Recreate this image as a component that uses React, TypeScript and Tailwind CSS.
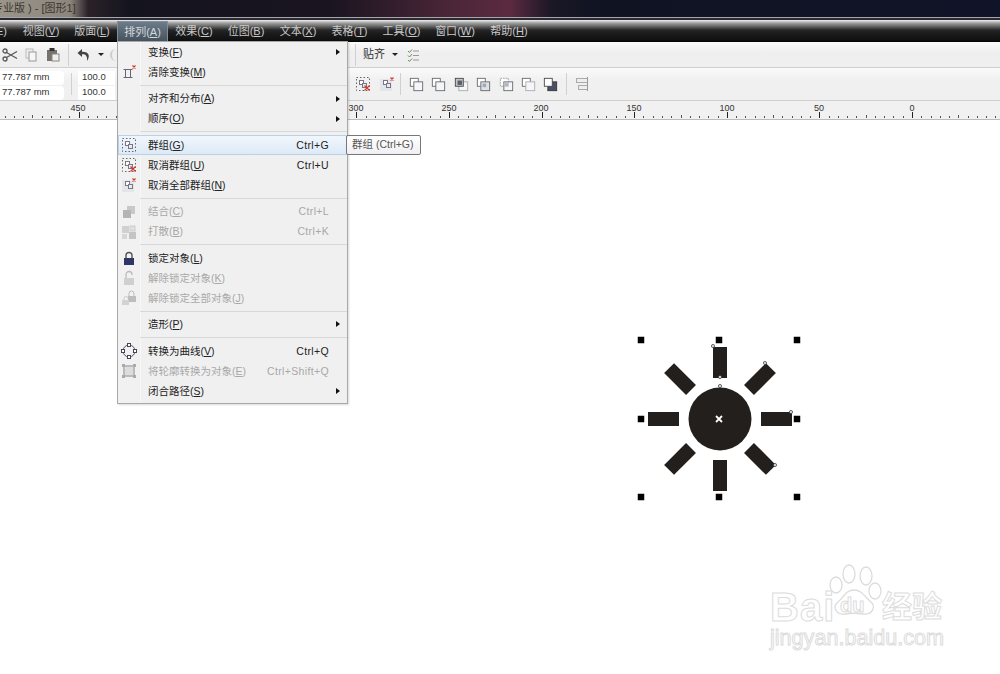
import React from "react";

const menuBar: [string, string, number][] = [
  ["视图", "V", 52], ["版面", "L", 50], ["排列", "A", 51], ["效果", "C", 52], ["位图", "B", 52],
  ["文本", "X", 52], ["表格", "T", 51], ["工具", "O", 53], ["窗口", "W", 54], ["帮助", "H", 54],
];

const S = ({ children, w = 16, h = 16, className = "" }: { children: React.ReactNode; w?: number; h?: number; className?: string }) => (
  <svg width={w} height={h} viewBox={`0 0 ${w} ${h}`} className={className} fill="none">{children}</svg>
);
const RedX = ({ x, y, s = 2 }: { x: number; y: number; s?: number }) => (
  <path d={`M${x - s} ${y - s}L${x + s} ${y + s}M${x + s} ${y - s}L${x - s} ${y + s}`} stroke="#d8352a" strokeWidth="1.2" />
);
const Dashed = () => <rect x="1.5" y="1.5" width="13" height="13" stroke="#666" strokeDasharray="1.5 2" />;
const Pair = ({ c = "#778" }: { c?: string }) => (
  <g stroke={c}><rect x="4.5" y="4.5" width="4" height="4" fill="#fff" /><rect x="7.5" y="7.5" width="4" height="4" fill="#e8ecf2" /></g>
);
const IconClear = () => <S><path d="M2.5 5.5h9M2.5 13.5h9M4.5 5.5v8M9.5 5.5v8" stroke="#667" /><RedX x={13} y={3} s={1.5} /></S>;
const IconGroup = () => <S><Dashed /><Pair /></S>;
const IconUngroup = () => <S><Dashed /><Pair /><RedX x={12} y={12} s={2.5} /></S>;
const IconUngroupAll = () => <S><rect x="1" y="3" width="12" height="12" fill="#e3e5ea" /><Pair /><RedX x={13} y={3} s={1.5} /></S>;
const IconCombine = () => <S><rect x="6" y="2" width="8" height="8" fill="#c8c8c8" /><rect x="2" y="6" width="8" height="8" fill="#b4b4b4" /></S>;
const IconBreak = () => <S><rect x="1" y="2" width="7" height="7" fill="#d0d0d0" /><rect x="9" y="2" width="5" height="5" fill="#e0e0e0" stroke="#ccc" /><rect x="1" y="10" width="5" height="5" fill="#d6d6d6" /><rect x="8" y="8" width="7" height="7" fill="#c4c4c4" /></S>;
const IconLock = () => (
  <S><path d="M5 8V5.5a3 3 0 0 1 6 0V8" stroke="#555" strokeWidth="1.4" /><rect x="3" y="8" width="10" height="7" fill="#2f3564" /></S>
);
const IconUnlock = () => <S><path d="M5 8V4.5a3 3 0 0 1 6 0V5" stroke="#bbb" strokeWidth="1.3" /><rect x="3" y="8" width="10" height="7" fill="#cfcfcf" /></S>;
const IconUnlockAll = () => <S><path d="M8 6V3.5a2.5 2.5 0 0 1 5 0V6" stroke="#bbb" /><rect x="7" y="6" width="8" height="6" fill="#bdbdbd" /><path d="M3 10V8.5a2 2 0 0 1 4 0" stroke="#ccc" /><rect x="1" y="10" width="7" height="5" fill="#d2d2d2" /></S>;
const IconCurve = () => (
  <S><circle cx="8" cy="8" r="6" stroke="#556" /><g fill="#fff" stroke="#445"><rect x="6.5" y="0.5" width="3" height="3" /><rect x="6.5" y="12.5" width="3" height="3" /><rect x="0.5" y="6.5" width="3" height="3" /><rect x="12.5" y="6.5" width="3" height="3" /></g></S>
);
const IconOutline = () => <S><rect x="3" y="3" width="10" height="10" fill="#ddd" stroke="#bbb" strokeWidth="2" /><g fill="#aaa"><rect x="1" y="1" width="3" height="3" /><rect x="12" y="1" width="3" height="3" /><rect x="1" y="12" width="3" height="3" /><rect x="12" y="12" width="3" height="3" /></g></S>;

type Row = { sep?: string; label?: string; k?: string; short?: string; arrow?: boolean; off?: boolean; hi?: boolean; icon?: React.ReactNode };

const items: Row[] = [
  { label: "变换", k: "F", arrow: true },
  { label: "清除变换", k: "M", icon: <IconClear /> },
  { sep: "h-[6.5px]" },
  { label: "对齐和分布", k: "A", arrow: true },
  { label: "顺序", k: "O", arrow: true },
  { sep: "h-[6.5px]" },
  { label: "群组", k: "G", short: "Ctrl+G", hi: true, icon: <IconGroup /> },
  { label: "取消群组", k: "U", short: "Ctrl+U", icon: <IconUngroup /> },
  { label: "取消全部群组", k: "N", icon: <IconUngroupAll /> },
  { sep: "h-[6.5px]" },
  { label: "结合", k: "C", short: "Ctrl+L", off: true, icon: <IconCombine /> },
  { label: "打散", k: "B", short: "Ctrl+K", off: true, icon: <IconBreak /> },
  { sep: "h-[6.5px]" },
  { label: "锁定对象", k: "L", icon: <IconLock /> },
  { label: "解除锁定对象", k: "K", off: true, icon: <IconUnlock /> },
  { label: "解除锁定全部对象", k: "J", off: true, icon: <IconUnlockAll /> },
  { sep: "h-[6px]" },
  { label: "造形", k: "P", arrow: true },
  { sep: "h-[7px]" },
  { label: "转换为曲线", k: "V", short: "Ctrl+Q", icon: <IconCurve /> },
  { label: "将轮廓转换为对象", k: "E", short: "Ctrl+Shift+Q", off: true, icon: <IconOutline /> },
  { label: "闭合路径", k: "S", arrow: true },
];

const Shapes = ({ v }: { v: number }) => {
  const b = v === 6 ? "#4a5064" : v === 3 ? "#dde2ea" : "#f4f6fa";
  return (
    <S w={17} h={17} className="w-[15px] h-[15px]">
      {v === 2 || v === 6 ? (
        <>
          <rect x="5.5" y="5.5" width="10" height="10" fill={b} stroke={v === 6 ? "#333" : "#aaa"} />
          <rect x="1.5" y="1.5" width="9" height="9" fill={v === 6 ? "#fff" : "#c4c4c4"} stroke="#444" />
          {v === 2 && <rect x="4" y="4" width="5" height="5" fill="#5a5f70" />}
        </>
      ) : (
        <>
          <rect x="1.5" y="1.5" width="9" height="9" fill="#fff" stroke={v === 4 ? "#999" : "#666"} strokeDasharray={v === 4 ? "2 1" : undefined} />
          <rect x="5.5" y="5.5" width="10" height="10" fill={b} stroke={v === 5 ? "#aaa" : "#666"} />
          {v === 3 && <rect x="7.5" y="7.5" width="4" height="4" fill="#a0a7b5" />}
          {v === 4 && <rect x="6" y="6" width="5" height="5" fill="#b4b8c4" />}
        </>
      )}
    </S>
  );
};

const ticks = Array.from({ length: 110 }, (_, i) => i);
const rulerLabels: [string, number][] = [["450", 78], ["300", 356], ["250", 449], ["200", 541], ["150", 634], ["100", 727], ["50", 819], ["0", 912]];

const Sep = ({ h = "h-[22px]", ml = "" }: { h?: string; ml?: string }) => <div className={`w-px bg-[#d0d0d0] ${h} ${ml}`} />;

const rays = [0, 45, 90, 135, 180, 225, 270, 315];
const corners: [number, number][] = [[11, 10], [89, 10], [167, 10], [11, 89], [167, 89], [11, 167], [89, 167], [167, 167]];
const nodes: [number, number][] = [[83, 16], [90, 47], [90, 56], [135, 33], [161, 82], [145, 135]];

export default function App() {
  return (
    <div className="relative w-[1000px] h-[674px] overflow-hidden bg-white flex flex-col [font-family:'Liberation_Sans','Noto_Sans_CJK_SC',sans-serif] text-[11px]">
      {/* title */}
      <div className="h-[17px] shrink-0 flex items-center bg-[linear-gradient(90deg,#9a948a_0px,#8c867c_70px,#2a2228_88px,#14141f_130px,#1a1420_330px,#4a2638_450px,#5c2a40_510px,#1c1826_550px,#0f1322_600px,#111428_1000px)]">
        <span className="ml-[-8px] text-[11px] text-[#3a3630] whitespace-pre">专业版 ) - [图形1]</span>
      </div>
      <div className="h-px shrink-0 bg-[#a5a5ab]" />
      <div className="h-[2px] shrink-0 bg-[#2a2a30]" />
      {/* menu bar */}
      <div className="h-[22px] shrink-0 flex bg-[linear-gradient(180deg,#f0f0f0_0px,#a0a0a0_3px,#5a5a5a_7px,#262626_10px,#1a1a1a_14px,#111_20px,#000_22px)] text-[#c9c9c9] text-[11px]">
        <div className="w-[15px] flex items-center justify-end pr-2 whitespace-nowrap">E)</div>
        {menuBar.map(([t, k, w]) => (
          <div
            key={t}
            style={{ width: w }}
            className={
              t === "排列"
                ? "flex items-center justify-center mt-px border border-b-0 border-[#7f8e9b] bg-[linear-gradient(180deg,#6d7c8a,#44515c)] text-[#d4d8dc]"
                : "flex items-center justify-center"
            }
          >
            {t}(<u>{k}</u>)
          </div>
        ))}
      </div>
      {/* toolbar 1 */}
      <div className="h-[26px] shrink-0 flex items-center bg-[linear-gradient(180deg,#fbfbfb,#efefef_40%)] border-b border-[#cfcfcf]">
        <div className="w-[2px]" />
        <S w={16} h={14}><circle cx="3" cy="3" r="2" stroke="#555" strokeWidth="1.3" /><circle cx="3" cy="11" r="2" stroke="#555" strokeWidth="1.3" /><path d="M4.5 4.5L15 10.5M4.5 9.5L15 3.5" stroke="#555" strokeWidth="1.2" /></S>
        <div className="w-[6px]" />
        <S w={12} h={14} className="ml-[1px]"><rect x="1" y="1" width="7" height="9" fill="#eee" stroke="#bbb" /><rect x="4" y="4" width="7" height="9" fill="#f6f6f6" stroke="#999" /></S>
        <div className="w-[9px]" />
        <S w={14} h={15}><rect x="1" y="3" width="10" height="11" fill="#77736a" /><rect x="3.5" y="1" width="5" height="3" fill="#333" /><rect x="6" y="7" width="7" height="7" fill="#eee" stroke="#888" /></S>
        <Sep ml="ml-[8px]" />
        <S w={16} h={14} className="ml-[7px]"><path d="M6 1L1.5 5L6 9V6.2C9.5 6 11.5 7.5 11 13C14.5 8 13 3.5 6 3.8Z" fill="#444" /></S>
        <div className="ml-[6px] w-0 h-0 border-x-[3px] border-x-transparent border-t-[3px] border-t-[#222]" />
        <div className="ml-[6px] w-[6px] h-[12px] rounded-l-full border-l-2 border-[#ccc]" />
        <div className="w-[239px]" />
        <Sep />
        <span className="ml-[7px] text-[#333] text-[11px]">贴齐</span>
        <div className="ml-[7px] w-0 h-0 border-x-[3px] border-x-transparent border-t-[3px] border-t-[#222]" />
        <S w={12} h={14} className="ml-[9px]"><path d="M1 3l1.5 1.5L5 1.5M1 7.5l1.5 1.5L5 6M1 12l1.5 1.5L5 10.5" stroke="#6c8a66" /><path d="M6 3h6M6 7.5h6M6 12h6" stroke="#999" /></S>
      </div>
      {/* toolbar 2 */}
      <div className="h-[33px] shrink-0 flex items-center bg-[linear-gradient(180deg,#fafafa,#f0f0f0_40%)] border-b border-[#cfcfcf]">
        <div className="w-[64px] h-[29px] mt-[2px] flex flex-col gap-px text-[#333] text-[9.5px]">
          <div className="h-[14px] bg-white rounded-r-sm flex items-center pl-[2px]">77.787 mm</div>
          <div className="h-[14px] bg-white rounded-r-sm flex items-center pl-[2px]">77.787 mm</div>
        </div>
        <Sep ml="ml-[7px]" />
        <div className="ml-[6px] w-[37px] h-[29px] mt-[2px] flex flex-col gap-px text-[#333] text-[9.5px]">
          <div className="h-[14px] bg-white flex items-center pl-[4px]">100.0</div>
          <div className="h-[14px] bg-white flex items-center pl-[4px]">100.0</div>
        </div>
        <div className="w-[240px]" />
        <IconUngroup />
        <div className="ml-[8px]"><IconUngroupAll /></div>
        <Sep ml="ml-[5px]" />
        <div className="ml-[8px] flex gap-[7.4px]">
          {[0, 1, 2, 3, 4, 5, 6].map((v) => (<Shapes key={v} v={v} />))}
        </div>
        <Sep ml="ml-[8px]" />
        <S w={14} h={14} className="ml-[8px]"><rect x="1.5" y="1.5" width="11" height="4" fill="#eee" stroke="#aaa" /><rect x="3.5" y="8.5" width="9" height="4" fill="#eee" stroke="#aaa" /><path d="M12.5 0v14" stroke="#999" /></S>
      </div>
      {/* ruler */}
      <div className="relative h-[19px] shrink-0 bg-[#f1f1f1] border-b border-[#bcbcbc]">
        <svg width="1000" height="18" className="block">
          {ticks.map((i) => {
            const x = 912 - (i - 9) * 9.26;
            const mid = (i - 9) % 5 === 0;
            const isLabelled = (i - 9) % 10 === 0;
            return (
              <path key={i} d={`M${Math.round(x) + 0.5} ${isLabelled ? 11 : mid ? 14 : 15}V17`} stroke={isLabelled ? "#222" : "#555"} />
            );
          })}
        </svg>
        {rulerLabels.map(([t, x]) => (
          <span key={t} style={{ left: x }} className="absolute top-[2px] -translate-x-1/2 text-[9px] leading-[11px] text-[#333]">{t}</span>
        ))}
      </div>
      {/* canvas */}
      <div className="relative flex-1 bg-white">
        <svg width="180" height="175" viewBox="0 0 180 175" className="absolute left-[630px] top-[210px]">
          <circle cx="90" cy="89" r="31.5" fill="#221f1c" />
          {rays.map((r) => (
            <rect key={r} x="83" y="17" width="14" height="31" fill="#221f1c" transform={`rotate(${r} 90 89)`} />
          ))}
          <path d="M86 86l6 6M92 86l-6 6" stroke="#fff" strokeWidth="1.8" />
          {corners.map(([x, y]) => (
            <rect key={`${x}-${y}`} x={x - 3.25} y={y - 3.25} width="6.5" height="6.5" fill="#000" />
          ))}
          {nodes.map(([x, y]) => (
            <circle key={`${x}-${y}`} cx={x} cy={y} r="1.6" fill="#ddd" stroke="#333" strokeWidth="0.7" />
          ))}
        </svg>
        {/* watermark */}
        <div className="absolute left-[770px] top-[454px] w-[190px] h-[90px] text-white [-webkit-text-stroke:1px_#dcdcdc]">
          <span className="absolute left-0 top-[11px] text-[40px] leading-[44px] font-bold tracking-[1px]">Bai</span>
          <svg width="60" height="60" viewBox="0 0 60 60" className="absolute left-[55px] top-[-11px]" fill="#fff" stroke="#dcdcdc" strokeWidth="1.3">
            <ellipse cx="11" cy="22" rx="6" ry="8" />
            <ellipse cx="24" cy="11" rx="6" ry="9" />
            <ellipse cx="41" cy="13" rx="6" ry="9" />
            <ellipse cx="50" cy="28" rx="6" ry="8" />
            <path d="M29 27C37 27 40 34 45 38C52 44 47 52 38 51C32 50 26 50 20 51C11 52 7 44 13 39C19 34 21 27 29 27Z" />
          </svg>
          <span className="absolute left-[70px] top-[20px] text-[20px] leading-[22px] font-bold">du</span>
          <span className="absolute left-[112px] top-[14px] text-[30px] leading-[38px] font-bold">经验</span>
          <span className="absolute left-0 top-[51px] text-[21.6px] leading-[26px] whitespace-nowrap">jingyan.baidu.com</span>
        </div>
      </div>
      {/* dropdown */}
      <div className="absolute left-[117px] top-[41px] w-[231px] h-[363px] border border-[#a8a8a8] shadow-[1px_1px_2px_rgba(0,0,0,0.15)] text-[10.5px] flex flex-col bg-[linear-gradient(90deg,#f1f1f1_21px,#e2e2e2_21px,#fff_22px,#f0f0f0_23px)]">
        {items.map((it, i) =>
          it.sep ? (
            <div key={i} className={`${it.sep} shrink-0 flex items-center pl-[22px]`}>
              <div className="flex-1 h-px bg-[#d8d8d8]" />
            </div>
          ) : (
            <div
              key={i}
              className={
                "h-5 shrink-0 flex items-center " +
                (it.hi ? "bg-[linear-gradient(180deg,#f2f7fc,#dce9f6)] shadow-[inset_0_0_0_1px_#b9d2ea] " : "") +
                (it.off ? "text-[#a8a8a8]" : "text-[#222]")
              }
            >
              <div className="w-[21px] flex items-center justify-center">{it.icon}</div>
              <div className="flex-1 pl-[9px] pt-px whitespace-nowrap">
                {it.label}(<u>{it.k}</u>)
              </div>
              {it.short && <div className="pt-px whitespace-nowrap tracking-[0.35px]">{it.short}</div>}
              <div className="w-[18px] flex items-center justify-center">
                {it.arrow && <div className="w-0 h-0 border-y-[3.5px] border-y-transparent border-l-[4px] border-l-[#111]" />}
              </div>
            </div>
          )
        )}
      </div>
      {/* tooltip */}
      <div className="absolute left-[346px] top-[135px] w-[75px] h-5 border border-[#777] rounded-[2px] bg-[linear-gradient(180deg,#fff,#f0f0f4)] text-[#555] text-[10.5px] flex items-center pl-[5px] whitespace-nowrap">
        群组 (Ctrl+G)
      </div>
    </div>
  );
}
